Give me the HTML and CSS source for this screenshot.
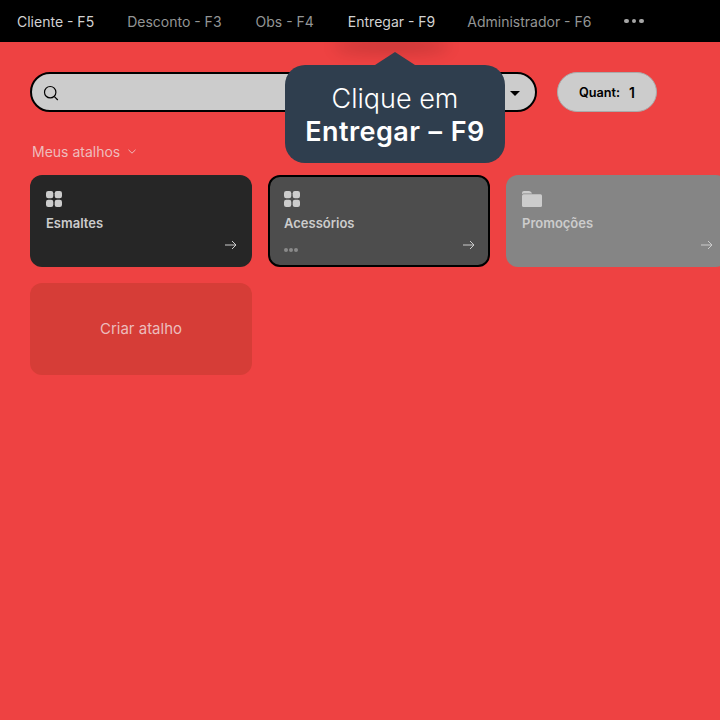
FILE: index.html
```html
<!DOCTYPE html>
<html lang="pt">
<head>
<meta charset="utf-8">
<title>PDV</title>
<link rel="stylesheet" href="styles.css">
</head>
<body>
<nav class="nav">
  <a class="nav-item on">Cliente - F5</a>
  <a class="nav-item nudge-1">Desconto - F3</a>
  <a class="nav-item">Obs - F4</a>
  <a class="nav-item on focus">Entregar - F9</a>
  <a class="nav-item nudge-2">Administrador - F6</a>
  <span class="nav-more"><i></i><i></i><i></i></span>
</nav>
<main class="main">
  <div class="top">
    <div class="search">
      <svg class="search-icon" width="16" height="16" viewBox="0 0 16 16" fill="none" stroke="#000" stroke-width="1.2"><circle cx="7.2" cy="7.2" r="5.7"/><path d="M11.4 11.6 14.8 15"/></svg>
      <span class="caret"></span>
    </div>
    <div class="quant"><span class="quant-label">Quant:</span><span class="quant-value">1</span></div>
  </div>
  <div class="short-title">Meus atalhos
    <svg width="8" height="5" viewBox="0 0 8 5" fill="none" stroke="currentColor" stroke-width="1"><path d="M.5 .8 4 4.200 7.500 .8"/></svg>
  </div>
  <div class="grid">
    <div class="card dark">
      <svg class="card-icon" width="16" height="16" viewBox="0 0 16 16" fill="#ccc"><rect width="7.3" height="7.3" rx="2.2"/><rect x="8.7" width="7.3" height="7.3" rx="2.2"/><rect y="8.7" width="7.3" height="7.3" rx="2.2"/><rect x="8.7" y="8.7" width="7.3" height="7.3" rx="2.2"/></svg>
      <div class="card-name">Esmaltes</div>
      <svg class="card-arrow" width="12" height="10" viewBox="0 0 12 10" fill="none" stroke="#ccc" stroke-width="1"><path d="M0 5H11M7 1 11 5 7 9"/></svg>
    </div>
    <div class="card mid">
      <svg class="card-icon" width="16" height="16" viewBox="0 0 16 16" fill="#ccc"><rect width="7.3" height="7.3" rx="2.2"/><rect x="8.7" width="7.3" height="7.3" rx="2.2"/><rect y="8.7" width="7.3" height="7.3" rx="2.2"/><rect x="8.7" y="8.7" width="7.3" height="7.3" rx="2.2"/></svg>
      <div class="card-name">Acessórios</div>
      <span class="card-dots"><i></i><i></i><i></i></span>
      <svg class="card-arrow" width="12" height="10" viewBox="0 0 12 10" fill="none" stroke="#ccc" stroke-width="1"><path d="M0 5H11M7 1 11 5 7 9"/></svg>
    </div>
    <div class="card light">
      <svg class="card-icon folder" width="20" height="16" viewBox="0 0 20 16" fill="#ccc"><path d="M0 3V2Q0 0 2 0H7Q8.500 0 9.500 1.500L10 2.500H1.500Q.5 2.500 0 3Z"/><rect y="3.300" width="20" height="12.700" rx="1.500"/></svg>
      <div class="card-name">Promoções</div>
      <svg class="card-arrow" width="12" height="10" viewBox="0 0 12 10" fill="none" stroke="#ccc" stroke-width="1"><path d="M0 5H11M7 1 11 5 7 9"/></svg>
    </div>
    <div class="card create">Criar atalho</div>
  </div>
</main>
<div class="tip">
  <span class="tip-arrow"></span>
  <div class="tip-line">Clique em</div>
  <div class="tip-line strong">Entregar – F9</div>
</div>
</body>
</html>
```
FILE: styles.css
```css
* { box-sizing: border-box; }
html, body { margin: 0; height: 100%; }
body {
  background: #ee4242;
  font-family: Inter, "Liberation Sans", sans-serif;
  overflow: hidden;
  position: relative;
}
.nav {
  height: 42px;
  background: #000;
  display: flex;
  align-items: center;
  gap: 34px;
  padding: 0 17px;
  font-size: 14px;
  color: #939595;
}
.nav-item { white-space: nowrap; position: relative; }
.nav-item.on { color: #d2d2d2; }
.nudge-1 { margin-left: -1px; }
.nudge-2 { margin-left: -2px; }
.nav-item.focus::after {
  content: "";
  position: absolute;
  left: -10px;
  right: -10px;
  top: 25px;
  height: 4px;
  border-radius: 50%;
  box-shadow: 0 6px 16px 4px rgba(0,0,0,.2);
  z-index: -1;
}
.nav-more { display: flex; gap: 3px; margin-left: -1px; }
.nav-more i { width: 4.500px; height: 4.500px; border-radius: 50%; background: #a6a6a6; }
.main { padding: 30px 0 0 30px; width: 727px; }
.top { display: flex; gap: 20px; }
.search {
  width: 507px;
  height: 40px;
  border: 2px solid #000;
  border-radius: 20px;
  background: #ccc;
  display: flex;
  align-items: center;
  justify-content: space-between;
  padding: 0 15px 0 11px;
}
.search-icon { margin-top: 2px; }
.caret {
  width: 0;
  height: 0;
  border: 5px solid transparent;
  border-top: 5px solid #000;
  border-bottom: 0;
  margin-top: 2px;
}
.quant {
  width: 100px;
  height: 40px;
  border: 1px solid #aaa;
  border-radius: 20px;
  background: #ccc;
  display: flex;
  align-items: center;
  justify-content: center;
  gap: 9px;
  color: #000;
  font-size: 12.700px;
  font-weight: 600;
}
.quant-value { font-size: 14px; }
.short-title {
  margin: 30px 0 0 2px;
  height: 18px;
  display: flex;
  align-items: center;
  gap: 8px;
  font-size: 14px;
  color: #eebcbc;
}
.grid {
  margin-top: 15px;
  display: grid;
  grid-template-columns: repeat(3, 222px);
  grid-auto-rows: 92px;
  gap: 16px;
}
.card {
  border-radius: 12px;
  padding: 16px;
  position: relative;
  color: #ccc;
}
.dark { background: #262626; }
.mid { background: #4d4d4d; border: 2px solid #000; padding: 14px; }
.light { background: #858585; }
.card-icon { display: block; }
.card-name { margin-top: 8px; font-size: 13px; font-weight: 600; line-height: 16px; }
.card-arrow { position: absolute; right: 15px; bottom: 17px; }
.mid .card-arrow { right: 13px; bottom: 15px; }
.card-dots { position: absolute; left: 14px; bottom: 13px; display: flex; gap: 1px; }
.card-dots i { width: 4px; height: 4px; border-radius: 50%; background: #8a8a8a; }
.create {
  background: #d63d37;
  color: #ecbcbc;
  font-size: 15px;
  padding-bottom: 18px;
  display: flex;
  align-items: center;
  justify-content: center;
}
.tip {
  position: absolute;
  left: 285px;
  top: 65px;
  width: 220px;
  height: 98px;
  border-radius: 20px;
  background: #2f3e4e;
  color: #fff;
  text-align: center;
  padding-top: 17px;
  font-size: 27px;
  line-height: 33px;
}
.tip-arrow {
  position: absolute;
  left: 90px;
  top: -13px;
  width: 0;
  height: 0;
  border-left: 20px solid transparent;
  border-right: 20px solid transparent;
  border-bottom: 13px solid #2f3e4e;
}
.tip-line { white-space: nowrap; font-weight: 300; }
.strong { font-weight: 600; letter-spacing: .45px; word-spacing: 1px; }
```
